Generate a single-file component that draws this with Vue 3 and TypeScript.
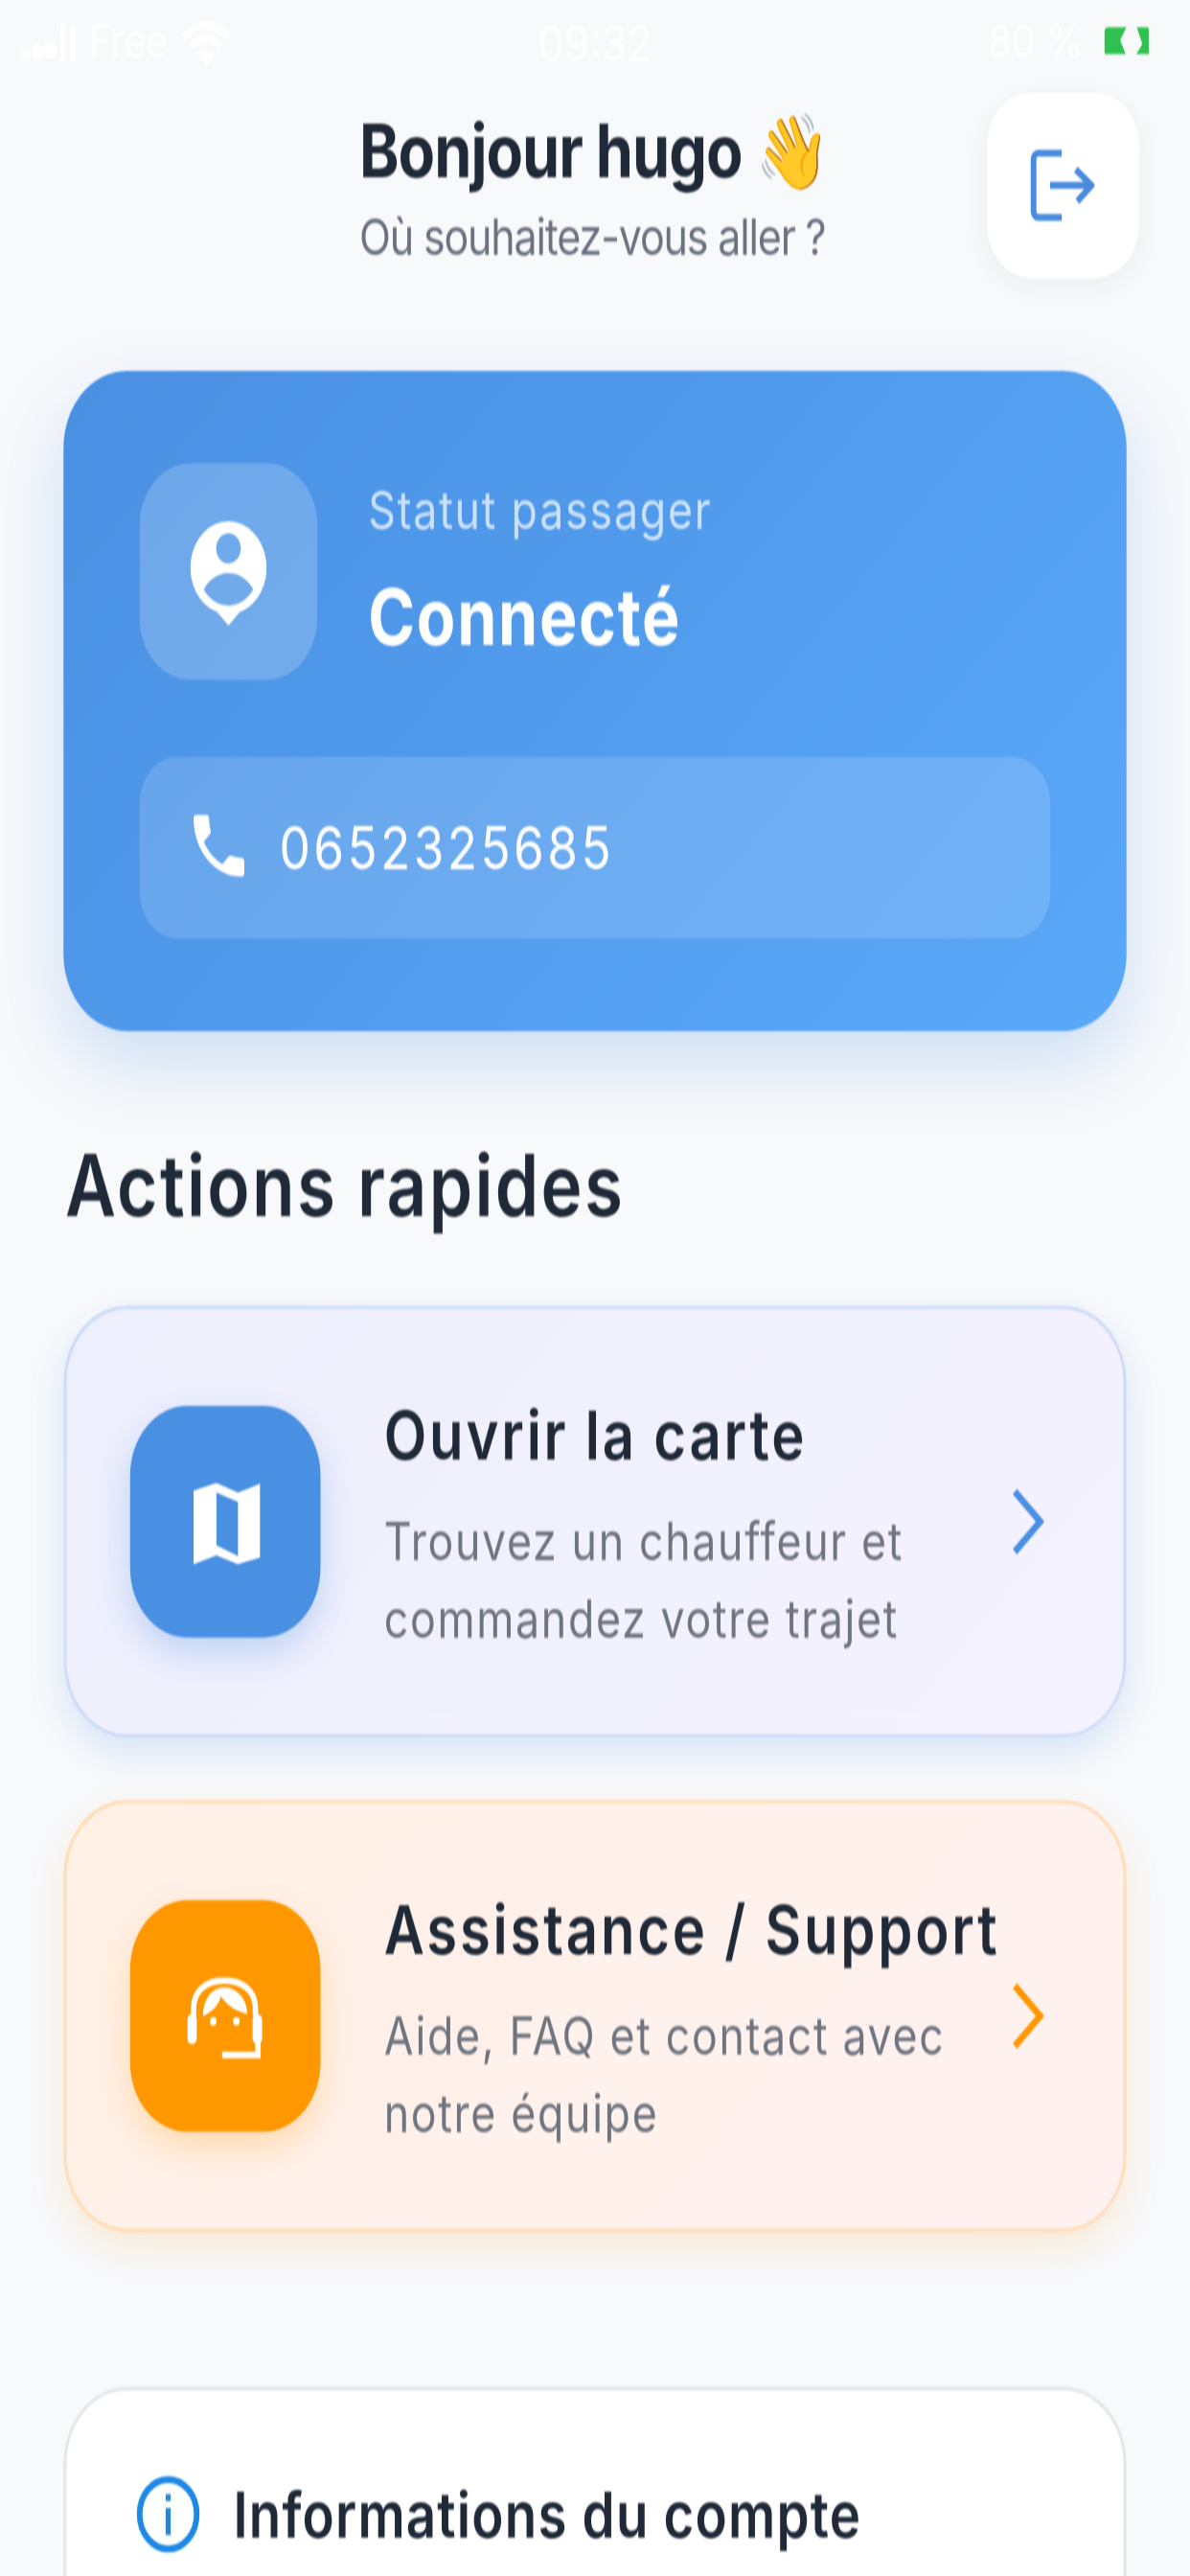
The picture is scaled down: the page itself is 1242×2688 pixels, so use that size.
<script setup lang="ts">
interface Action {
  title: string
  lines: string[]
  tone: 'blue' | 'orange'
}
const actions: Action[] = [
  { title: 'Ouvrir la carte', lines: ['Trouvez un chauffeur et', 'commandez votre trajet'], tone: 'blue' },
  { title: 'Assistance / Support', lines: ['Aide, FAQ et contact avec', 'notre équipe'], tone: 'orange' },
]
</script>

<template>
  <div class="viewport">
    <div class="screen">
      <div class="status">
        <div class="status-side">
          <svg viewBox="0 0 18 10" width="18" height="10"><g fill="#fff"><circle cx="2" cy="8" r="1.6"/><circle cx="6" cy="7.5" r="2"/><circle cx="10" cy="7" r="2.2"/><rect x="13" y="0" width="1.6" height="10"/><rect x="16" y="0" width="1.6" height="10"/></g></svg>
          <span>Free</span>
          <svg viewBox="0 0 16 12" width="16" height="12"><path d="M1 4.5a10 10 0 0 1 14 0M3.4 7a6.6 6.6 0 0 1 9.2 0" fill="none" stroke="#fff" stroke-width="2"/><path d="M8 12 5.4 9a3.6 3.6 0 0 1 5.2 0z" fill="#fff"/></svg>
        </div>
        <span class="time">09:32</span>
        <div class="status-side right">
          <span>80 %</span>
          <svg viewBox="0 0 14.5 7.5" width="14.5" height="7.5"><path d="M1.2 0H7L5 3.4 7 7.5H1.2A1.2 1.2 0 0 1 0 6.3V1.2A1.2 1.2 0 0 1 1.2 0z" fill="#2fc24f"/><path d="M10.2 0h3.1a1.2 1.2 0 0 1 1.2 1.2v5.1a1.2 1.2 0 0 1-1.2 1.2h-3.6L12 4.4z" fill="#2fc24f"/></svg>
        </div>
      </div>

      <header class="header">
        <div></div>
        <div class="greet">
          <div class="hello">Bonjour hugo 👋</div>
          <div class="sub">Où souhaitez-vous aller ?</div>
        </div>
        <div class="logout">
          <svg viewBox="0 0 24 24" width="24" height="24" fill="none" stroke="#4A8BE0" stroke-width="1.8" stroke-linejoin="round">
            <path d="M11.6 3.7H4.2a1.5 1.5 0 0 0-1.5 1.5v13.6a1.5 1.5 0 0 0 1.5 1.5h7.4"/>
            <path d="M7.9 12H21M16 7.9l5 4.1-4.5 4.1"/>
          </svg>
        </div>
      </header>

      <section class="hero">
        <div class="hero-top">
          <div class="hero-tile">
            <svg viewBox="0 0 24 27" width="24" height="27"><path fill="#fff" fill-rule="evenodd" d="M12 0a12 12 0 0 1 3.6 23.45L12 27l-3.6-3.55A12 12 0 0 1 12 0zm0 3.1a3.9 3.9 0 1 0 0 7.8 3.9 3.9 0 0 0 0-7.8zM12 13.4c-3.6 0-6.4 2-7.8 4.2 1.4 2.2 4.2 4.2 7.8 4.2s6.4-2 7.8-4.2c-1.4-2.2-4.2-4.2-7.8-4.2z"/></svg>
          </div>
          <div>
            <div class="hero-label">Statut passager</div>
            <div class="hero-value">Connecté</div>
          </div>
        </div>
        <div class="phone">
          <svg viewBox="3 3 18 18" width="16" height="16"><path fill="#fff" d="M6.62 10.79c1.44 2.83 3.76 5.14 6.59 6.59l2.2-2.2c.27-.27.67-.36 1.02-.24 1.12.37 2.33.57 3.57.57.55 0 1 .45 1 1V20c0 .55-.45 1-1 1-9.39 0-17-7.61-17-17 0-.55.45-1 1-1h3.5c.55 0 1 .45 1 1 0 1.25.2 2.45.57 3.57.11.35.03.74-.25 1.02l-2.2 2.2z"/></svg>
          <span>0652325685</span>
        </div>
      </section>

      <h2 class="section">Actions rapides</h2>

      <div class="actions">
        <div v-for="a in actions" :key="a.title" class="action" :class="a.tone">
          <div class="tile">
            <svg v-if="a.tone === 'blue'" viewBox="0 0 21 21" width="21" height="21"><path fill="#fff" fill-rule="evenodd" d="M0 2 7.2 0 14 2.5 21 .2v19.1L14 21l-6.8-2.3L0 21zM7.2 2.5v13.6L14 18.9V4.9z"/></svg>
            <svg v-else viewBox="0 0 24 21" width="24" height="21">
              <path d="M2 10V8C2 3.5 6 .8 11.7.8S21.5 3.5 21.5 8v2" fill="none" stroke="#fff" stroke-width="1.7"/>
              <rect x="0" y="9.6" width="3" height="7.6" rx="1.4" fill="#fff"/>
              <rect x="20.6" y="9.6" width="3" height="7.6" rx="1.4" fill="#fff"/>
              <path d="M22.3 16.5v3.6H11" fill="none" stroke="#fff" stroke-width="1.7"/>
              <path d="M5 10C5 5.5 8 2.6 11.7 2.6S18.9 5.5 18.9 9.4C16 9 12.7 7.5 10.6 4.9 10 7 8 9 5 10z" fill="#fff"/>
              <circle cx="8.2" cy="11.4" r="1.05" fill="#fff"/>
              <circle cx="15.5" cy="11.4" r="1.05" fill="#fff"/>
            </svg>
          </div>
          <div class="action-text">
            <div class="action-title">{{ a.title }}</div>
            <div class="action-desc"><div v-for="l in a.lines" :key="l">{{ l }}</div></div>
          </div>
          <svg class="chev" viewBox="0 0 11 18" width="11" height="18"><path d="M1.8 1.2 9.8 9l-8 7.8" fill="none" stroke-width="1.9"/></svg>
        </div>
      </div>

      <section class="info">
        <svg viewBox="0 0 20 20" width="20" height="20"><circle cx="10" cy="10" r="9" fill="none" stroke="#1E88E5" stroke-width="1.8"/><rect x="9.2" y="8.4" width="1.6" height="7" fill="#1E88E5"/><rect x="9.2" y="4.8" width="1.6" height="1.8" fill="#1E88E5"/></svg>
        <span>Informations du compte</span>
      </section>
    </div>
  </div>
</template>

<style>
html, body { margin: 0; background: #F8F9FB; }
</style>

<style scoped>
.viewport {
  width: 1242px;
  height: 2688px;
  overflow: hidden;
  background: #F8F9FB;
}
.screen {
  width: 375px;
  height: 667px;
  box-sizing: border-box;
  padding: 0 20px;
  transform: scale(3.312, 4.03);
  transform-origin: 0 0;
  filter: blur(0.2px);
  font-family: Inter, "Noto Sans", sans-serif;
  color: #1F2937;
}
.status {
  height: 21px;
  margin: 0 -14px;
  display: grid;
  grid-template-columns: 1fr auto 1fr;
  align-items: center;
  color: #fff;
  font-size: 12px;
}
.status-side { display: flex; align-items: center; gap: 4px; }
.status-side.right { justify-content: flex-end; gap: 6px; padding-right: 7px; }
.time { font-size: 13px; }
.header {
  margin: 3px -4px 0;
  height: 48px;
  display: grid;
  grid-template-columns: 1fr auto 1fr;
  align-items: center;
}
.greet { margin-top: 2px; }
.hello {
  font-size: 19px;
  font-weight: 700;
  letter-spacing: -0.3px;
  line-height: 24px;
  white-space: nowrap;
}
.sub {
  font-size: 13px;
  color: #6B7280;
  letter-spacing: -0.36px;
  line-height: 19px;
  white-space: nowrap;
}
.logout {
  justify-self: end;
  width: 48px;
  height: 48px;
  border-radius: 14px;
  background: #fff;
  box-shadow: 0 2px 8px rgba(0, 0, 0, 0.05);
  display: flex;
  align-items: center;
  justify-content: center;
}
.hero {
  margin-top: 24px;
  height: 171px;
  box-sizing: border-box;
  padding: 24px;
  border-radius: 20px;
  background: linear-gradient(135deg, #4A90E2, #5AA8F8);
  box-shadow: 0 8px 20px rgba(74, 144, 226, 0.25);
  color: #fff;
}
.hero-top { display: flex; align-items: center; gap: 16px; }
.hero-tile {
  width: 56px;
  height: 56px;
  border-radius: 16px;
  background: rgba(255, 255, 255, 0.2);
  display: flex;
  align-items: center;
  justify-content: center;
}
.hero-label {
  font-size: 13.5px;
  letter-spacing: 0.54px;
  line-height: 16px;
  color: rgba(255, 255, 255, 0.7);
}
.hero-value {
  margin-top: 8px;
  font-size: 20px;
  font-weight: 700;
  letter-spacing: 0.5px;
  line-height: 24px;
}
.phone {
  margin-top: 20px;
  height: 47px;
  box-sizing: border-box;
  padding: 0 17px 1px;
  border-radius: 12px;
  background: rgba(255, 255, 255, 0.15);
  display: flex;
  align-items: center;
  gap: 11px;
  font-size: 15.5px;
  letter-spacing: 1.02px;
}
.section {
  margin: 28px 0 0;
  padding-left: 0.5px;
  font-size: 22px;
  font-weight: 600;
  line-height: 24px;
  letter-spacing: 0.7px;
}
.actions {
  margin-top: 19px;
  display: flex;
  flex-direction: column;
  gap: 16px;
}
.action {
  height: 112px;
  box-sizing: border-box;
  padding: 0 20px;
  border-radius: 20px;
  border: 1px solid;
  display: flex;
  align-items: center;
  gap: 20px;
}
.action.blue {
  background: linear-gradient(135deg, #EEEFFC, #F5F2FF);
  border-color: rgba(74, 144, 226, 0.2);
  box-shadow: 0 4px 10px rgba(74, 144, 226, 0.18);
}
.action.orange {
  background: linear-gradient(135deg, #FFF1E6, #FFF1F0);
  border-color: rgba(255, 152, 0, 0.2);
  box-shadow: 0 4px 10px rgba(255, 152, 0, 0.15);
}
.tile {
  flex: none;
  width: 60px;
  height: 60px;
  border-radius: 18px;
  display: flex;
  align-items: center;
  justify-content: center;
}
.blue .tile { background: #4A90E2; box-shadow: 0 4px 10px rgba(74, 144, 226, 0.3); }
.orange .tile { background: #FF9800; box-shadow: 0 4px 10px rgba(255, 152, 0, 0.25); }
.action-text { flex: 1; min-width: 0; margin-top: 2px; }
.action-title {
  font-size: 17.5px;
  font-weight: 600;
  line-height: 22px;
  letter-spacing: 0.85px;
  white-space: nowrap;
}
.action-desc {
  margin-top: 6px;
  font-size: 13.5px;
  line-height: 20px;
  letter-spacing: 0.5px;
  color: #6F7580;
  white-space: nowrap;
}
.chev { flex: none; margin: 0 5px 0 -8px; }
.blue .chev { stroke: #4A90E2; }
.orange .chev { stroke: #FF9800; }
.info {
  margin-top: 40px;
  height: 100px;
  box-sizing: border-box;
  padding: 22px;
  border-radius: 20px;
  border: 1px solid #E5E7EB;
  background: #fff;
  display: flex;
  align-items: flex-start;
  gap: 10.5px;
  font-size: 16.5px;
  font-weight: 600;
  letter-spacing: 0.36px;
  line-height: 20px;
}
</style>
